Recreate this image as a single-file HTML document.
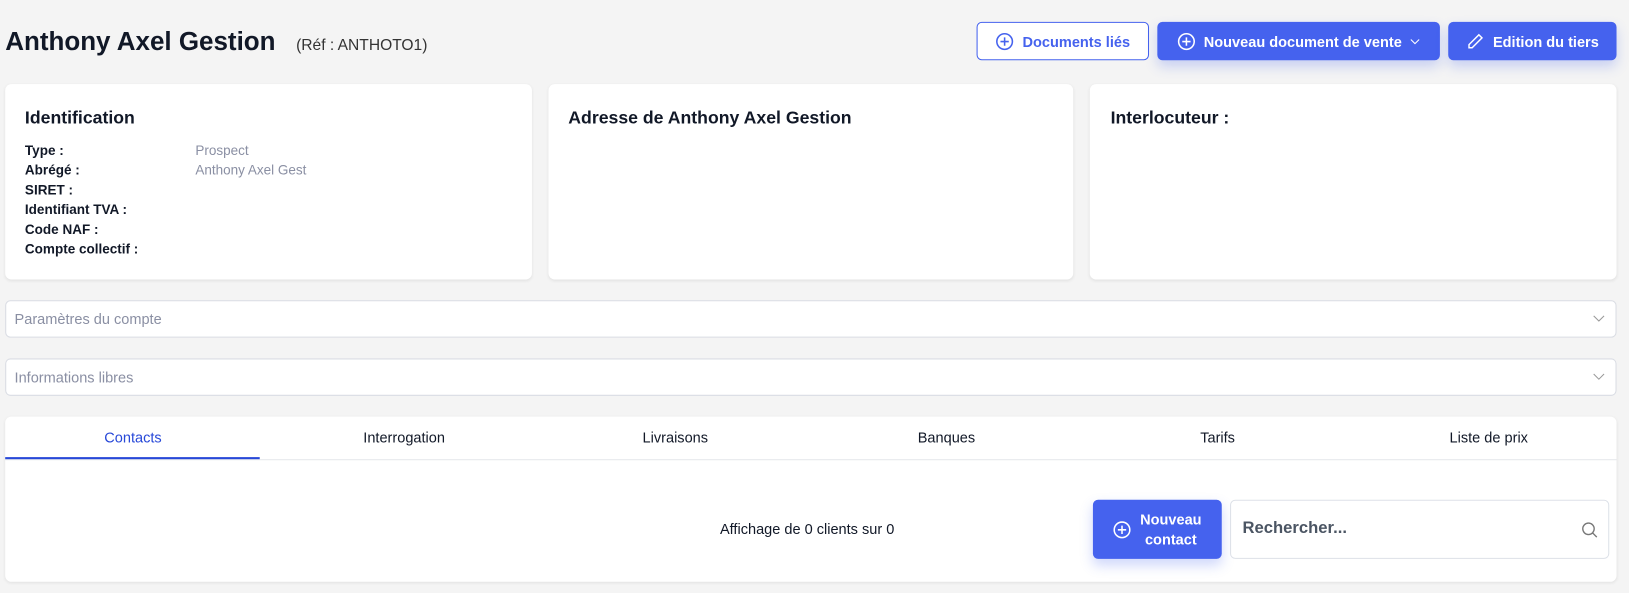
<!DOCTYPE html>
<html><head><meta charset="utf-8"><style>
*{box-sizing:border-box;margin:0;padding:0}
body{width:1629px;height:593px;background:#f4f4f4;font-family:"Liberation Sans",sans-serif;color:#111827;position:relative;overflow:hidden}
#w{position:absolute;left:0;top:0;width:1568px;height:571px;transform:scale(1.0389);transform-origin:0 0}
.abs{position:absolute}
.card{position:absolute;background:#fff;border-radius:6px;box-shadow:0 1px 3px rgba(0,0,0,.08)}
.btn{position:absolute;height:37px;border-radius:5px;display:flex;align-items:center;justify-content:center;font-size:14px;font-weight:bold;gap:8px}
.blue{background:#4562ee;color:#fff;box-shadow:0 6px 12px rgba(69,98,238,.25)}
h3{font-size:17px;font-weight:bold;position:absolute}
.lbl{font-size:13px;font-weight:bold;line-height:19px}
.val{font-size:13px;color:#8a8fa3;line-height:19px}
.acc{position:absolute;left:5px;width:1551px;height:36px;background:#fff;border:1px solid #d9dce3;border-radius:5px;font-size:14px;color:#8a8fa3;padding:9px 8px}
.acc svg{position:absolute;right:10px;top:13px}
.tab{position:absolute;top:413px;font-size:14px;text-align:center;width:246px}
</style></head><body><div id="w">
<div class="abs" style="left:5px;top:26px;font-size:25px;font-weight:bold">Anthony Axel Gestion</div>
<div class="abs" style="left:285px;top:35px;font-size:15px;color:#333">(Réf : ANTHOTO1)</div>

<div class="btn" style="left:940px;top:21px;width:166px;border:1px solid #4562ee;color:#4562ee;background:#fff">
<svg width="18" height="18" viewBox="0 0 18 18" fill="none" stroke="#4562ee" stroke-width="1.5"><circle cx="9" cy="9" r="7.5"/><path d="M9 5v8M5 9h8"/></svg>Documents liés</div>
<div class="btn blue" style="left:1114px;top:21px;width:272px">
<svg width="18" height="18" viewBox="0 0 18 18" fill="none" stroke="#fff" stroke-width="1.5"><circle cx="9" cy="9" r="7.5"/><path d="M9 5v8M5 9h8"/></svg>Nouveau document de vente <svg width="10" height="6" viewBox="0 0 10 6" fill="none" stroke="#fff"><path d="M1 1l4 4 4-4"/></svg></div>
<div class="btn blue" style="left:1394px;top:21px;width:162px">
<svg width="18" height="18" viewBox="0 0 18 18" fill="none" stroke="#fff" stroke-width="1.4"><path d="M12.5 2.5l3 3L6 15H3v-3z"/></svg>Edition du tiers</div>

<div class="card" style="left:5px;top:81px;width:507px;height:188px">
<h3 style="left:19px;top:23px">Identification</h3>
<div class="abs" style="left:19px;top:54px">
<div class="lbl">Type :</div><div class="lbl">Abrégé :</div><div class="lbl">SIRET :</div><div class="lbl">Identifiant TVA :</div><div class="lbl">Code NAF :</div><div class="lbl">Compte collectif :</div></div>
<div class="abs" style="left:183px;top:54px"><div class="val">Prospect</div><div class="val">Anthony Axel Gest</div></div>
</div>
<div class="card" style="left:528px;top:81px;width:505px;height:188px"><h3 style="left:19px;top:23px">Adresse de Anthony Axel Gestion</h3></div>
<div class="card" style="left:1049px;top:81px;width:507px;height:188px"><h3 style="left:20px;top:23px">Interlocuteur :</h3></div>

<div class="acc" style="top:289px">Paramètres du compte<svg width="12" height="7" viewBox="0 0 12 7" fill="none" stroke="#999"><path d="M1 1l5 5 5-5"/></svg></div>
<div class="acc" style="top:345px">Informations libres<svg width="12" height="7" viewBox="0 0 12 7" fill="none" stroke="#999"><path d="M1 1l5 5 5-5"/></svg></div>

<div class="card" style="left:5px;top:401px;width:1551px;height:159px">
<div class="abs" style="left:0;top:41px;width:1551px;border-top:1px solid #e5e7eb"></div>
<div class="abs" style="left:0;top:39px;width:245px;height:2px;background:#2748d8"></div>
</div>
<div class="tab" style="left:5px;color:#2748d8">Contacts</div>
<div class="tab" style="left:266px">Interrogation</div>
<div class="tab" style="left:527px">Livraisons</div>
<div class="tab" style="left:788px">Banques</div>
<div class="tab" style="left:1049px">Tarifs</div>
<div class="tab" style="left:1310px">Liste de prix</div>

<div class="abs" style="left:693px;top:501px;font-size:14px">Affichage de 0 clients sur 0</div>
<div class="btn blue" style="left:1052px;top:481px;width:124px;height:57px;line-height:19px">
<svg width="18" height="18" viewBox="0 0 18 18" fill="none" stroke="#fff" stroke-width="1.5"><circle cx="9" cy="9" r="7.5"/><path d="M9 5v8M5 9h8"/></svg><div style="text-align:center">Nouveau<br>contact</div></div>
<div class="abs" style="left:1184px;top:481px;width:365px;height:57px;background:#fff;border:1px solid #dde1e8;border-radius:5px;font-size:16px;font-weight:bold;color:#4b5563;padding:18px 11px">Rechercher...
<svg style="position:absolute;right:10px;top:20px" width="16" height="16" viewBox="0 0 16 16" fill="none" stroke="#777" stroke-width="1.3"><circle cx="7" cy="7" r="5.5"/><path d="M11 11l4 4"/></svg></div>
</div></body></html>
